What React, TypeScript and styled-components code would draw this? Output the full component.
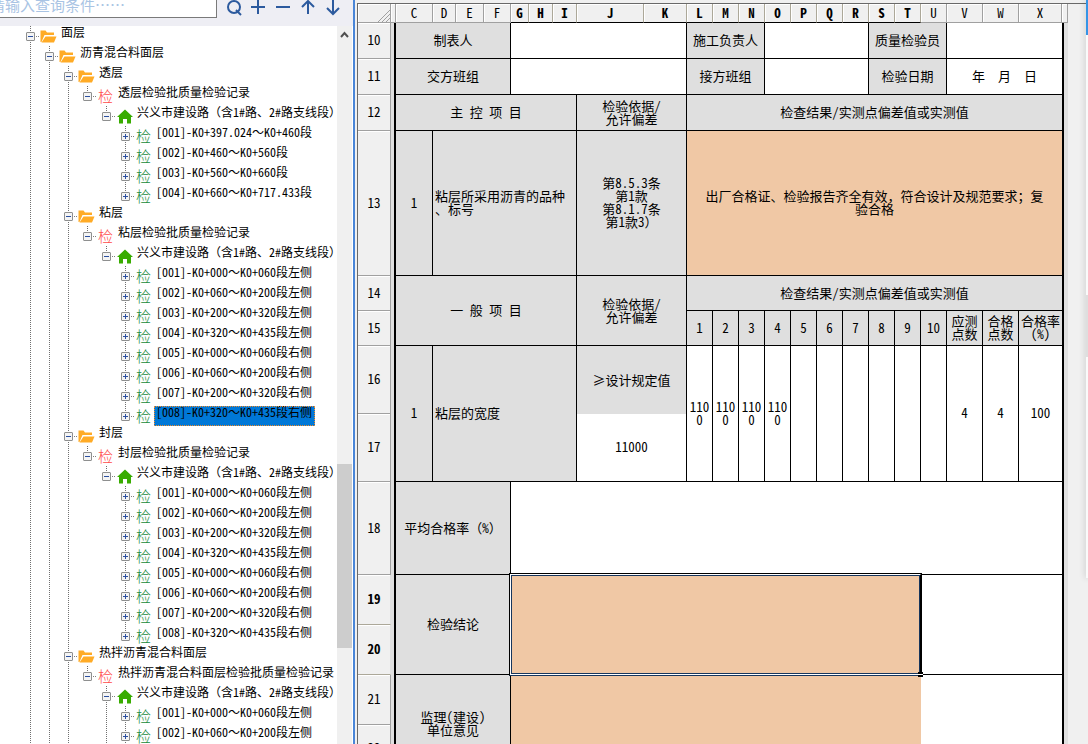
import React from "react";
import styled, { createGlobalStyle, css } from "styled-components";

const GlobalStyle = createGlobalStyle`
  * { box-sizing: border-box; }
  body {
    margin: 0;
    overflow: hidden;
    background: #f0f0f0;
    color: #000;
    font-family: "Noto Sans CJK SC", "Liberation Sans", sans-serif;
    font-feature-settings: "hwid" 1;
    text-spacing-trim: space-all;
  }
`;

const Page = styled.div`
  display: flex;
  height: 100vh;
  overflow: hidden;
`;

/* ---------- tree side ---------- */

const Side = styled.aside`
  display: flex;
  flex-direction: column;
  flex: 0 0 355px;
  min-width: 0;
  background: #fff;
  border-right: 2px solid #4a86d8;
`;

const Toolbar = styled.div`
  display: flex;
  flex: 0 0 26px;
  align-items: flex-start;
  gap: 7px;
  overflow: hidden;
  background: #eeeef4;
`;

const SearchInput = styled.input`
  width: 229px;
  height: 26px;
  margin: -8px 0 0 -12px;
  padding: 0 0 2px 1px;
  border: 1px solid #7a7a7a;
  background: #fff;
  font: inherit;
  font-size: 15px;
  &::placeholder { color: #a9c4e4; opacity: 1; }
`;

const ToolButton = styled.button`
  display: block;
  width: 18px;
  height: 16px;
  padding: 0;
  border: 0;
  background: none;
  svg { display: block; }
`;

const TreeArea = styled.div`
  display: flex;
  flex: 1;
  min-height: 0;
  padding-right: 1px;
`;

const Tree = styled.ul`
  flex: 1;
  min-width: 0;
  margin: 0;
  padding: 0 0 0 21px;
  list-style: none;
  overflow: hidden;
`;

const TreeRow = styled.li`
  display: flex;
  height: 20px;
  white-space: nowrap;
`;

type Line = "none" | "full" | "half";

const Guide = styled.span<{ $line: Line }>`
  display: flex;
  align-items: center;
  flex: 0 0 19px;
  padding-left: 5px;
  background-repeat: no-repeat;
  ${(p) =>
    p.$line !== "none" &&
    css`
      background-image: repeating-linear-gradient(#707070 0 1px, transparent 1px 2px);
      background-position: 9px 0;
      background-size: 1px ${p.$line === "full" ? "20px" : "10px"};
    `}
`;

const Expander = styled.button`
  display: block;
  flex: 0 0 9px;
  height: 9px;
  padding: 0;
  border: 1px solid #8e8f8f;
  border-radius: 1px;
  background: #f4f4f4;
  svg { display: block; }
`;

const Dots = styled.span`
  flex: 1;
  height: 1px;
  background: repeating-linear-gradient(90deg, transparent 0 1px, #808080 1px 2px);
`;

const IconSlot = styled.span`
  display: flex;
  align-items: center;
  flex: 0 0 19px;
`;

const CheckGlyph = styled.span<{ $color: string }>`
  padding-left: 1px;
  color: ${(p) => p.$color};
  font-size: 15px;
  line-height: 18px;
  font-weight: 300;
`;

const NodeLabel = styled.a<{ $selected?: boolean }>`
  padding: 0 2px 0 1px;
  border: 1px solid transparent;
  border-width: 0 1px;
  color: #000;
  font-size: 12px;
  line-height: 12px;
  text-decoration: none;
  ${(p) =>
    p.$selected &&
    css`
      background: #0078d7;
      outline: 1px dotted #f08a28;
      outline-offset: -1px;
    `}
`;

const ScrollTrack = styled.div`
  display: flex;
  flex-direction: column;
  flex: 0 0 15px;
  background: #f0f0f0;
`;

const ScrollUp = styled.button`
  height: 17px;
  padding: 0;
  border: 0;
  background: none;
  svg { display: block; margin: 0 0 0 2px; }
`;

const ScrollThumb = styled.div`
  height: 184px;
  margin-top: 421px;
  background: #cdcdcd;
`;

/* ---------- sheet side ---------- */

const SheetSide = styled.main`
  flex: 1;
  min-width: 0;
  padding: 3px 0 0 2px;
  overflow: hidden;
  background: #f0f0f0;
`;

const SheetFrame = styled.div`
  display: flex;
  height: 100%;
  overflow: hidden;
  border: 1px solid #696969;
  border-width: 1px 0 0 1px;
`;

const Sheet = styled.table`
  flex: none;
  align-self: flex-start;
  width: 710px;
  table-layout: fixed;
  border-collapse: separate;
  border-spacing: 0;
  font-size: 13px;
  line-height: 13px;
  text-align: center;
`;

const HeadRow = styled.tr`
  height: 19px;
`;

const SheetRow = styled.tr<{ $h: number }>`
  height: ${(p) => p.$h}px;
`;

const ColHead = styled.th<{ $active?: boolean }>`
  padding: 0 0 2px;
  background: #f0f0f0;
  border-right: 1px solid ${(p) => (p.$active ? "#aca899" : "#a0a0a0")};
  border-bottom: 1px solid ${(p) => (p.$active ? "#000" : "#a0a0a0")};
  box-shadow: inset 1px 1px 0 #fff;
  font-weight: ${(p) => (p.$active ? 700 : 400)};
`;

const Corner = styled(ColHead)`
  padding: 0;
  vertical-align: bottom;
  svg { display: block; margin-left: auto; }
`;

const RowHead = styled.th<{ $active?: boolean }>`
  padding: 0 0 2px;
  background: #f0f0f0;
  border-right: 1px solid ${(p) => (p.$active ? "#e0e0e0" : "#a0a0a0")};
  border-bottom: 1px solid ${(p) => (p.$active ? "#aca899" : "#a0a0a0")};
  box-shadow: inset 0 1px 0 #fff;
  font-weight: ${(p) => (p.$active ? 700 : 400)};
`;

const Gutter = styled.td`
  padding: 0;
  background: #e0e0e0;
  border-right: 2px solid #000;
`;

const EndGutter = styled.td`
  padding: 0;
  background: #e0e0e0;
  border-left: 2px solid #000;
`;

const fills = { grey: "#dfdfdf", white: "#fff", peach: "#f0c8a5" };

const Cell = styled.td<{
  $fill: keyof typeof fills;
  $left?: boolean;
  $noRight?: boolean;
  $noBottom?: boolean;
}>`
  position: relative;
  padding: 0 2px 2px;
  background: ${(p) => fills[p.$fill]};
  border: 0 solid #000;
  border-right-width: ${(p) => (p.$noRight ? 0 : 1)}px;
  border-bottom-width: ${(p) => (p.$noBottom ? 0 : 1)}px;
  text-align: ${(p) => (p.$left ? "left" : "center")};
  word-break: break-all;
`;

const Spaced = styled.span`
  white-space: pre;
`;

const Selection = styled.div`
  position: absolute;
  z-index: 1;
  inset: -2px;
  border: 1px solid #000;
  border-bottom-color: #17365d;
  &::before {
    content: "";
    position: absolute;
    inset: 0;
    border: 1px solid #fff;
    border-right-color: #000;
  }
  &::after {
    content: "";
    position: absolute;
    inset: 1px;
    border: 1px solid #17365d;
  }
`;

const FillHandle = styled.div`
  position: absolute;
  z-index: 2;
  right: -3px;
  bottom: -3px;
  width: 5px;
  height: 5px;
  border: 2px solid #000;
  border-width: 2px 0;
  background: #fff;
`;

const WindowEdge = styled.div`
  position: fixed;
  z-index: 3;
  top: 0;
  right: 0;
  width: 2px;
  height: 578px;
  background: linear-gradient(#3494e6 0 35px, #fafafa 35px 295px, #dedede 295px 357px, #fafafa 357px);
  box-shadow: 0 0 6px rgba(0, 0, 0, 0.3);
`;

/* Full-width punctuation keeps its em-wide form while Latin text stays half-width. */
const FullWidth = styled.span`
  font-feature-settings: "hwid" 0;
`;

const Mixed = ({ text }: { text: string }) => (
  <>
    {text.split(/([（）～，]+)/).map((part, i) =>
      i % 2 ? <FullWidth key={i}>{part}</FullWidth> : part
    )}
  </>
);

/* ---------- icons ---------- */

const FolderIcon = () => (
  <svg width="17" height="13" viewBox="0 0 17 13" fill="#ffab26">
    <path d="M0.5 0.5H5.5L7 2.5H14V5H4.5L1.5 12L0.5 12Z" />
    <path d="M5.5 6.5H16.5L14 12.5H1.5Z" />
  </svg>
);

const HomeIcon = () => (
  <svg width="17" height="15" viewBox="0 0 17 15" fill="#38ac00">
    <path d="M9 0.5L1 8H3V14.5H7V10H11V14.5H15V8H17Z" />
  </svg>
);

const toolPaths: [string, React.ReactNode][] = [
  ["查询", <><circle cx="10" cy="7" r="6" /><path d="M12 10L17 15" /></>],
  ["展开", <path d="M2 7H16M9 0V14" />],
  ["收起", <path d="M2 7H16" />],
  ["上一个", <path d="M9 14V1M3 7L9 1L15 7" />],
  ["下一个", <path d="M9 0V13M3 8L9 14L15 8" />],
];

/* ---------- tree data ---------- */

type Kind = "folder" | "record" | "home" | "item";
interface TreeNode {
  level: number;
  kind: Kind;
  text: string;
  selected?: boolean;
}

const road = "兴义市建设路（含1#路、2#路支线段）";
const sections = [
  "K0+000～K0+060段左侧",
  "K0+060～K0+200段左侧",
  "K0+200～K0+320段左侧",
  "K0+320～K0+435段左侧",
  "K0+000～K0+060段右侧",
  "K0+060～K0+200段右侧",
  "K0+200～K0+320段右侧",
  "K0+320～K0+435段右侧",
];

const group = (name: string, items: string[], selected = -1): TreeNode[] => [
  { level: 2, kind: "folder", text: name },
  { level: 3, kind: "record", text: `${name}检验批质量检验记录` },
  { level: 4, kind: "home", text: road },
  ...items.map((t, i) => ({
    level: 5,
    kind: "item" as Kind,
    text: `[00${i + 1}]-${t}`,
    selected: i === selected,
  })),
];

const nodes: TreeNode[] = [
  { level: 0, kind: "folder", text: "面层" },
  { level: 1, kind: "folder", text: "沥青混合料面层" },
  ...group("透层", [
    "K0+397.024～K0+460段",
    "K0+460～K0+560段",
    "K0+560～K0+660段",
    "K0+660～K0+717.433段",
  ]),
  ...group("粘层", sections, 7),
  ...group("封层", sections),
  ...group("热拌沥青混合料面层", sections),
];
const lastGroupStart = nodes.length - sections.length - 1;

const lineFor = (node: TreeNode, index: number, depth: number): Line => {
  if (depth < 3) return "full";
  if (depth === 3) return node.level === 3 ? "half" : "none";
  if (depth === 4) {
    if (index >= lastGroupStart) return "full";
    return node.level === 4 ? "half" : "none";
  }
  const next = nodes[index + 1];
  return next && next.level === 5 ? "full" : "half";
};

const NodeIcon = ({ kind }: { kind: Kind }) => {
  if (kind === "folder") return <FolderIcon />;
  if (kind === "home") return <HomeIcon />;
  return <CheckGlyph $color={kind === "record" ? "#ff4b4b" : "#168a3a"}>检</CheckGlyph>;
};

const TreeItem = ({ node, index }: { node: TreeNode; index: number }) => {
  const closed = node.kind === "item";
  return (
    <TreeRow>
      {Array.from({ length: node.level }, (_, d) => (
        <Guide key={d} $line={lineFor(node, index, d)} />
      ))}
      <Guide $line={lineFor(node, index, node.level)}>
        <Expander aria-label={closed ? "展开" : "折叠"}>
          <svg width="7" height="7" stroke="#2b4fa0">
            <path d={closed ? "M1 3.5H6M3.5 1V6" : "M1 3.5H6"} />
          </svg>
        </Expander>
        <Dots />
      </Guide>
      <IconSlot>
        <NodeIcon kind={node.kind} />
      </IconSlot>
      <NodeLabel href="#" $selected={node.selected}><Mixed text={node.text} /></NodeLabel>
    </TreeRow>
  );
};

/* ---------- sheet data ---------- */

const columns: [string, number][] = [
  ["C", 37], ["D", 23], ["E", 28], ["F", 27], ["G", 18], ["H", 24], ["I", 24],
  ["J", 67], ["K", 43], ["L", 26], ["M", 26], ["N", 26], ["O", 26], ["P", 26],
  ["Q", 26], ["R", 26], ["S", 26], ["T", 26], ["U", 26], ["V", 36], ["W", 36], ["X", 43],
];

const Row = ({ n, h, active, children }: { n: number; h: number; active?: boolean; children?: React.ReactNode }) => (
  <SheetRow $h={h}>
    <RowHead scope="row" $active={active}>{n}</RowHead>
    <Gutter />
    {children}
    <EndGutter />
  </SheetRow>
);

const measured = ["1100", "1100", "1100", "1100", "", "", "", "", "", ""];

export default function App() {
  return (
    <>
      <GlobalStyle />
      <Page>
        <Side>
          <Toolbar>
            <SearchInput aria-label="查询条件" placeholder="请输入查询条件……" />
            {toolPaths.map(([name, shape]) => (
              <ToolButton key={name} aria-label={name}>
                <svg width="18" height="16" fill="none" stroke="#2c5a9e" strokeWidth="2">{shape}</svg>
              </ToolButton>
            ))}
          </Toolbar>
          <TreeArea>
            <Tree>
              {nodes.map((node, i) => (
                <TreeItem key={i} node={node} index={i} />
              ))}
            </Tree>
            <ScrollTrack>
              <ScrollUp aria-label="向上滚动">
                <svg width="11" height="15" fill="none" stroke="#505050" strokeWidth="2">
                  <path d="M2 10L5.5 6L9 10" />
                </svg>
              </ScrollUp>
              <ScrollThumb />
            </ScrollTrack>
          </TreeArea>
        </Side>

        <SheetSide>
          <SheetFrame>
            <Sheet>
              <colgroup>
                <col style={{ width: 33 }} />
                <col style={{ width: 5 }} />
                {columns.map(([name, w]) => (
                  <col key={name} style={{ width: w }} />
                ))}
                <col style={{ width: 6 }} />
              </colgroup>
              <thead>
                <HeadRow>
                  <Corner>
                    <svg width="12" height="12" stroke="#a0a0a0">
                      <path d="M0 12L12 0M4 12L12 4M8 12L12 8" />
                    </svg>
                  </Corner>
                  <ColHead />
                  {columns.map(([name]) => (
                    <ColHead key={name} scope="col" $active={name >= "G" && name <= "T"}>{name}</ColHead>
                  ))}
                  <ColHead />
                </HeadRow>
              </thead>
              <tbody>
                <Row n={10} h={36}>
                  <Cell colSpan={4} $fill="grey">制表人</Cell>
                  <Cell colSpan={5} $fill="white" />
                  <Cell colSpan={3} $fill="grey">施工负责人</Cell>
                  <Cell colSpan={4} $fill="white" />
                  <Cell colSpan={3} $fill="grey">质量检验员</Cell>
                  <Cell colSpan={3} $fill="white" $noRight />
                </Row>
                <Row n={11} h={36}>
                  <Cell colSpan={4} $fill="grey">交方班组</Cell>
                  <Cell colSpan={5} $fill="white" />
                  <Cell colSpan={3} $fill="grey">接方班组</Cell>
                  <Cell colSpan={4} $fill="white" />
                  <Cell colSpan={3} $fill="grey">检验日期</Cell>
                  <Cell colSpan={3} $fill="white" $noRight><Spaced>年  月  日</Spaced></Cell>
                </Row>
                <Row n={12} h={36}>
                  <Cell colSpan={7} $fill="grey">主 控 项 目</Cell>
                  <Cell colSpan={2} $fill="grey">检验依据/<br />允许偏差</Cell>
                  <Cell colSpan={13} $fill="grey" $noRight>检查结果/实测点偏差值或实测值</Cell>
                </Row>
                <Row n={13} h={145}>
                  <Cell $fill="grey">1</Cell>
                  <Cell colSpan={6} $fill="grey" $left>粘层所采用沥青的品种<br />、标号</Cell>
                  <Cell colSpan={2} $fill="grey">
                    第8.5.3条<br />第1款<br />第8.1.7条<br /><Mixed text="第1款3）" />
                  </Cell>
                  <Cell colSpan={13} $fill="peach" $noRight>
                    <Mixed text="出厂合格证、检验报告齐全有效，符合设计及规范要求；复" /><br />验合格
                  </Cell>
                </Row>
                <Row n={14} h={35}>
                  <Cell colSpan={7} rowSpan={2} $fill="grey">一 般 项 目</Cell>
                  <Cell colSpan={2} rowSpan={2} $fill="grey">检验依据/<br />允许偏差</Cell>
                  <Cell colSpan={13} $fill="grey" $noRight>检查结果/实测点偏差值或实测值</Cell>
                </Row>
                <Row n={15} h={35}>
                  {measured.map((_, i) => (
                    <Cell key={i} $fill="grey">{i + 1}</Cell>
                  ))}
                  <Cell $fill="grey">应测<br />点数</Cell>
                  <Cell $fill="grey">合格<br />点数</Cell>
                  <Cell $fill="grey" $noRight>合格率<br />(%)</Cell>
                </Row>
                <Row n={16} h={68}>
                  <Cell rowSpan={2} $fill="grey">1</Cell>
                  <Cell colSpan={6} rowSpan={2} $fill="grey" $left>粘层的宽度</Cell>
                  <Cell colSpan={2} $fill="grey" $noBottom>≥设计规定值</Cell>
                  {measured.map((v, i) => (
                    <Cell key={i} rowSpan={2} $fill="white">{v}</Cell>
                  ))}
                  <Cell rowSpan={2} $fill="white">4</Cell>
                  <Cell rowSpan={2} $fill="white">4</Cell>
                  <Cell rowSpan={2} $fill="white" $noRight>100</Cell>
                </Row>
                <Row n={17} h={68}>
                  <Cell colSpan={2} $fill="white">11000</Cell>
                </Row>
                <Row n={18} h={93}>
                  <Cell colSpan={4} $fill="grey"><Mixed text="平均合格率（%）" /></Cell>
                  <Cell colSpan={18} $fill="white" $noRight />
                </Row>
                <Row n={19} h={50} active>
                  <Cell colSpan={4} rowSpan={2} $fill="grey">检验结论</Cell>
                  <Cell colSpan={14} rowSpan={2} $fill="peach">
                    <Selection />
                    <FillHandle />
                  </Cell>
                  <Cell colSpan={4} rowSpan={2} $fill="white" $noRight />
                </Row>
                <Row n={20} h={50} active />
                <Row n={21} h={50}>
                  <Cell colSpan={4} rowSpan={2} $fill="grey">监理(建设)<br />单位意见</Cell>
                  <Cell colSpan={14} rowSpan={2} $fill="peach" $noRight />
                  <Cell colSpan={4} rowSpan={2} $fill="white" $noRight />
                </Row>
                <Row n={22} h={48} />
              </tbody>
            </Sheet>
          </SheetFrame>
        </SheetSide>
      </Page>
      <WindowEdge />
    </>
  );
}
